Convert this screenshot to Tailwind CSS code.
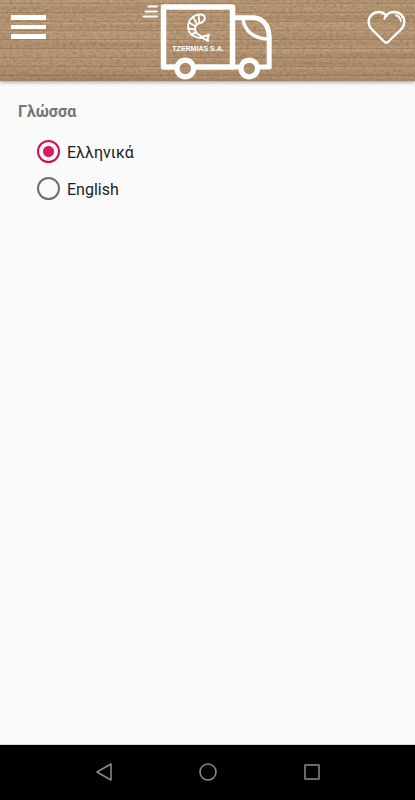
<!DOCTYPE html>
<html lang="el">
<head>
  <meta charset="UTF-8" />
  <title>Tzermias S.A.</title>
  <meta name="viewport" content="width=device-width, initial-scale=1.0" />
  <script src="https://cdn.jsdelivr.net/npm/@tailwindcss/browser@4"></script>
</head>
<body class="min-h-screen flex flex-col bg-[#fafafa] font-['Roboto','Noto_Sans',sans-serif]">

  <!-- HEADER -->
  <header class="relative h-[81px] flex items-start justify-between bg-[#bb9c7a] shadow-[0_1px_4px_rgba(0,0,0,0.4)]">
    <!-- cardboard -->
    <svg class="absolute inset-0 w-full h-full" aria-hidden="true">
      <defs>
        <filter id="grain" x="0" y="0" width="100%" height="100%" color-interpolation-filters="sRGB">
          <feTurbulence type="fractalNoise" baseFrequency="0.3 0.4" numOctaves="3" seed="4" />
          <feColorMatrix values="0 0 0 0 0.45  0 0 0 0 0.34  0 0 0 0 0.24  0.7 0 0 0 -0.24" />
        </filter>
        <filter id="fibre" x="0" y="0" width="100%" height="100%" color-interpolation-filters="sRGB">
          <feTurbulence type="fractalNoise" baseFrequency="0.004 0.15" numOctaves="2" seed="9" />
          <feColorMatrix values="0 0 0 0 0.5  0 0 0 0 0.36  0 0 0 0 0.24  0.6 0 0 0 -0.24" />
        </filter>
        <linearGradient id="shade" x1="0" y1="0" x2="0" y2="1">
          <stop offset="0" stop-color="#c4a580" stop-opacity="0.3" />
          <stop offset="0.6" stop-color="#b4956f" stop-opacity="0" />
          <stop offset="1" stop-color="#805a34" stop-opacity="0.25" />
        </linearGradient>
        <pattern id="ridges" width="415" height="9" patternUnits="userSpaceOnUse">
          <rect y="3" width="415" height="1" fill="#84603c" opacity="0.35" />
          <rect y="4" width="415" height="2" fill="#d0b28c" opacity="0.2" />
        </pattern>
      </defs>
      <rect width="100%" height="100%" fill="url(#shade)" />
      <rect width="100%" height="100%" fill="url(#ridges)" />
      <rect width="100%" height="100%" filter="url(#fibre)" />
      <rect width="100%" height="100%" filter="url(#grain)" />
    </svg>

    <div class="relative flex-1 pl-[11px] pt-[15px]">
      <button type="button" aria-label="Menu" class="block">
        <svg class="block" width="35" height="24" fill="#fff">
          <rect width="35" height="5" />
          <rect y="10" width="35" height="4" />
          <rect y="19" width="35" height="5" />
        </svg>
      </button>
    </div>

    <!-- LOGO -->
    <a href="#" aria-label="Tzermias S.A." class="relative block">
      <svg class="block overflow-visible" width="130" height="81" viewBox="144 0 130 81" fill="none" stroke="#fff" stroke-linecap="round" stroke-linejoin="round">
        <path d="M148.500 6.500H157M145.500 11.500H157M143.500 16.500H157" stroke-width="2" />
        <path d="M174 67H163.500V7H232.500V67H197" stroke-width="5.500" />
        <path d="M232.500 67H238M235 17.800H254C264 18.500 269.200 27 269.200 38V67H261" stroke-width="5" />
        <path d="M243 19C244.500 31 254 38.500 268 39" stroke-width="3.500" />
        <circle cx="185.300" cy="68.500" r="8.300" stroke-width="5.200" />
        <circle cx="249.300" cy="68.500" r="8.300" stroke-width="5.200" />
        <!-- shrimp -->
        <g stroke-width="1.900">
          <path d="M198.500 23.500C202 23 205.300 20.500 204.800 17.500C204 13.500 198 13.500 193.500 16.500C188.500 20 187 25.500 188.800 30.500C191 36 197 38.500 203.500 38C200.500 35.500 196.500 34.500 195.500 31C194.500 27.500 195.500 24.500 198.500 23.500Z" />
          <path d="M198.500 15L199.500 23M193 17L197 24M189 22.500L195.500 26.500M188.300 28.500L195 29.500M191 34.500L196 32.500" />
          <path d="M203 36.500L209 35L207.800 38L208 41L203.500 38.500Z" />
        </g>
        <text x="198" y="50.500" text-anchor="middle" fill="#fff" stroke="none" class="font-['Liberation_Sans',sans-serif] text-[7px] font-bold">TZERMIAS S.A.</text>
      </svg>
    </a>

    <div class="relative flex-1 flex justify-end pr-[9px] pt-[10px]">
      <button type="button" aria-label="Favorites" class="block">
        <svg class="block" width="39" height="34" viewBox="0 0 39 34" fill="none" stroke="#fff" stroke-width="2.400" stroke-linecap="round" stroke-linejoin="round">
          <path d="M17.500 8.500C18.500 5 22 2 27 2C33 2 37.300 6.500 37.300 12C37.300 15 36 17.500 34 19.500L21.500 31.500C20 33 18.500 33 17 31.500L5 19.500C3 17.500 1.700 15 1.700 12C1.700 6.500 6 2 11.500 2C15 2 17.500 3.500 19.500 6" />
          <path d="M29 5.500C32 6.200 33.500 8.300 33.800 11" stroke-width="1.900" />
        </svg>
      </button>
    </div>
  </header>

  <!-- LANGUAGE -->
  <main class="flex-1 px-[18px] pt-[21px]">
    <fieldset>
      <legend class="text-base leading-5 font-bold text-[#757575]">Γλώσσα</legend>
      <div class="flex flex-col gap-[11px] pl-[19px] pt-[18px]">
        <label class="flex items-start gap-[7px] text-base leading-[26px] text-[#1c1c1c]">
          <input type="radio" name="lang" value="el" checked class="appearance-none size-[23px] rounded-full border-2 border-[#6e6e6e] checked:border-[#c81458] checked:bg-[radial-gradient(circle,#d81b60_5px,transparent_6px)]">
          Ελληνικά
        </label>
        <label class="flex items-start gap-[7px] text-base leading-[26px] text-[#1c1c1c]">
          <input type="radio" name="lang" value="en" class="appearance-none size-[23px] rounded-full border-2 border-[#6e6e6e] checked:border-[#c81458] checked:bg-[radial-gradient(circle,#d81b60_5px,transparent_6px)]">
          English
        </label>
      </div>
    </fieldset>
  </main>

  <!-- SYSTEM NAVIGATION -->
  <nav class="h-14 flex items-center justify-center gap-20 pb-0.5 bg-black border-t border-[#d8d8d8]">
    <button type="button" aria-label="Back">
      <svg class="block" width="24" height="24" fill="none" stroke="#8c8c8c" stroke-width="1.500" stroke-linejoin="round">
        <path d="M19 4V20L5 12Z" />
      </svg>
    </button>
    <button type="button" aria-label="Home">
      <svg class="block" width="24" height="24" fill="none" stroke="#8c8c8c" stroke-width="1.500">
        <circle cx="12" cy="12" r="8" />
      </svg>
    </button>
    <button type="button" aria-label="Recent apps">
      <svg class="block" width="24" height="24" fill="none" stroke="#8c8c8c" stroke-width="1.500" stroke-linejoin="round">
        <rect x="5" y="5" width="14" height="14" />
      </svg>
    </button>
  </nav>

</body>
</html>
